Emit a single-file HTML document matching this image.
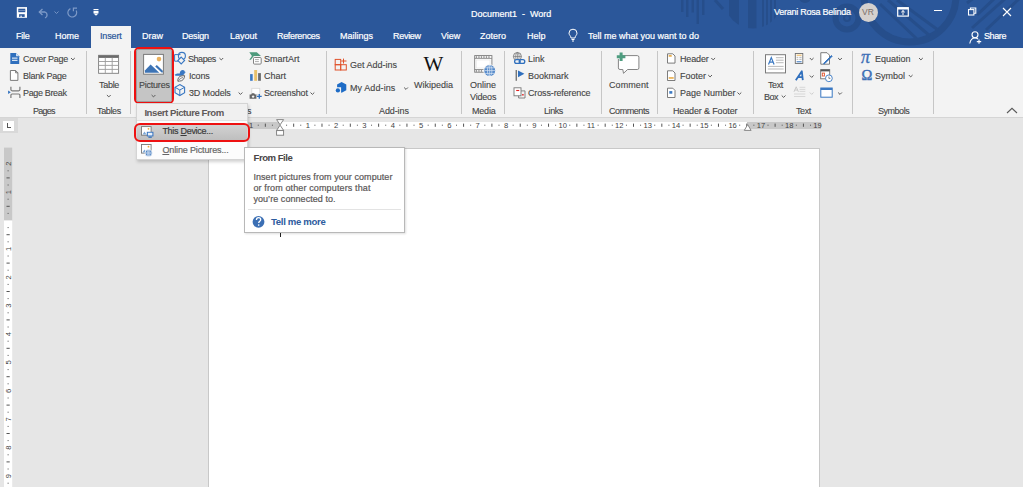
<!DOCTYPE html>
<html><head><meta charset="utf-8">
<style>
*{margin:0;padding:0;box-sizing:border-box}
html,body{width:1023px;height:487px;overflow:hidden;background:#e6e6e6;font-family:"Liberation Sans",sans-serif;font-size:9px;color:#444}
.rt,.gl,.tt{-webkit-text-stroke:0.12px currentColor;font-size:9.5px !important;transform:scaleX(0.947);transform-origin:0 0}
.tt{-webkit-text-stroke:0.22px currentColor}
.a{position:absolute;white-space:nowrap}
#title{position:absolute;left:0;top:0;width:1023px;height:48px;background:#2b579a;overflow:hidden}
.tt{position:absolute;color:#fff;font-size:9px;line-height:10px;white-space:nowrap}
#ribbon{position:absolute;left:0;top:48px;width:1023px;height:70px;background:#f3f3f3;border-bottom:1px solid #d5d5d5}
.rt{position:absolute;font-size:9px;line-height:10px;color:#444;white-space:nowrap}
.gl{position:absolute;font-size:9px;line-height:10px;color:#444;white-space:nowrap;top:105.8px}
.sep{position:absolute;top:51px;width:1px;height:63px;background:#c6c6c6}
.arr{position:absolute;width:5px;height:3px}
svg{position:absolute;overflow:visible}
</style></head><body>
<div id="title">
<svg width="1023" height="48" style="left:0;top:0">
 <g fill="#264e8b">
  <rect x="681" y="0" width="2.5" height="12"/>
  <rect x="686" y="0" width="2.5" height="17"/>
  <rect x="691.5" y="0" width="2.5" height="12.5"/>
  <rect x="696.5" y="0" width="2.5" height="24"/>
  <rect x="702" y="0" width="2.5" height="15"/>
 </g>
 <clipPath id="hc"><circle cx="753" cy="0" r="28.5"/></clipPath>
 <g clip-path="url(#hc)" fill="#264e8b">
  <rect x="729" y="0" width="10" height="30"/>
  <rect x="748" y="0" width="8.5" height="30"/>
  <rect x="762" y="0" width="2" height="30"/>
  <rect x="766" y="0" width="2" height="30"/>
  <rect x="770" y="0" width="2" height="30"/>
  <rect x="774" y="0" width="2" height="30"/>
 </g>
 <path d="M715 0 L723 9" stroke="#264e8b" stroke-width="3"/>
 <circle cx="847" cy="18" r="11.5" fill="none" stroke="#264e8b" stroke-width="6"/>
 <circle cx="847" cy="18" r="3" fill="none" stroke="#264e8b" stroke-width="2"/>
 <circle cx="805" cy="-3" r="6" fill="#264e8b"/>
 <circle cx="910" cy="-4" r="46" fill="none" stroke="#264e8b" stroke-width="7"/>
 <g stroke="#264e8b" stroke-width="3">
  <path d="M880 4 L918 40"/>
  <path d="M888 0 L930 36"/>
  <path d="M897 0 L938 30"/>
  <path d="M967 3 L975 -3"/>
  <path d="M977 15 L995 -2"/>
  <path d="M972 28 L1006 -2"/>
  <path d="M986 30 L1020 -2"/>
 </g>
</svg>
<!-- QAT -->
<svg width="14" height="14" style="left:15px;top:5px" viewBox="15 5 14 14">
 <rect x="16.8" y="7.1" width="10.2" height="10.7" fill="#fff"/>
 <rect x="18.3" y="8.7" width="7" height="3.5" fill="#2b579a"/>
 <rect x="18.3" y="10.2" width="7" height="0.7" fill="#8aa3cc"/>
 <rect x="19.1" y="14.2" width="5.6" height="2.7" fill="#2b579a"/>
 <rect x="20.4" y="15.6" width="1.4" height="1.3" fill="#fff"/>
</svg>
<svg width="12" height="10" style="left:38px;top:7.5px" viewBox="0 0 12 10">
 <path d="M1.5 4 H7 A3.2 3.2 0 0 1 7 10" fill="none" stroke="#7e9ac7" stroke-width="1.3"/>
 <path d="M4.5 1 L1.3 4 L4.5 7" fill="none" stroke="#7e9ac7" stroke-width="1.3"/>
</svg>
<svg width="5" height="3" style="left:54px;top:11px" viewBox="0 0 5 3"><path d="M0.5 0.5 L2.5 2.5 L4.5 0.5" fill="none" stroke="#7e9ac7" stroke-width="0.9"/></svg>
<svg width="14" height="14" style="left:65px;top:5px" viewBox="65 5 14 14">
 <path d="M70.4 8.6 A4.4 4.4 0 1 0 76.2 10.6" fill="none" stroke="#7e9ac7" stroke-width="1.2"/>
 <path d="M73.4 11.3 V8.2 H77" fill="none" stroke="#7e9ac7" stroke-width="1.2"/>
</svg>
<svg width="6" height="7" style="left:92.5px;top:9px" viewBox="0 0 6 7">
 <rect x="0.5" y="0" width="5" height="1.2" fill="#fff"/>
 <rect x="0.5" y="2" width="5" height="2.3" fill="#fff"/>
 <path d="M0.5 4.6 H5.5 L3 6.8 Z" fill="#fff"/>
</svg>
<div class="tt" style="left:470.5px;top:8.5px">Document1&nbsp;&nbsp;-&nbsp;&nbsp;Word</div>
<div class="tt" style="left:774px;top:7.3px;letter-spacing:-0.27px">Verani Rosa Belinda</div>
<div class="a" style="left:858.5px;top:2.5px;width:19px;height:19px;border-radius:50%;background:#d5d1ce;color:#7a6f68;font-size:8.5px;line-height:19px;text-align:center">VR</div>
<svg width="12" height="10" style="left:897px;top:6.5px" viewBox="0 0 12 10">
 <rect x="0.7" y="0.7" width="10.6" height="8.4" fill="none" stroke="#fff" stroke-width="1.2"/>
 <rect x="0.7" y="0.7" width="10.6" height="1.8" fill="#fff"/>
 <path d="M6 3.5 V8 M4.2 5.3 L6 3.6 L7.8 5.3" fill="none" stroke="#fff" stroke-width="1"/>
</svg>
<div class="a" style="left:933.5px;top:10.3px;width:8px;height:1.1px;background:#fff"></div>
<svg width="12" height="12" style="left:966px;top:5px" viewBox="966 5 12 12">
 <rect x="968.5" y="9.6" width="5.4" height="5.4" fill="none" stroke="#fff" stroke-width="1.05"/>
 <path d="M970.4 9.6 V7.9 H975.8 V13.2 H973.9" fill="none" stroke="#fff" stroke-width="1.05"/>
</svg>
<svg width="10" height="10" style="left:1001.5px;top:6.5px" viewBox="0 0 10 10">
 <path d="M1 1 L9 9 M9 1 L1 9" stroke="#fff" stroke-width="1.1"/>
</svg>
<!-- tabs -->
<div class="tt" style="left:15.5px;top:31.4px;letter-spacing:-0.3px">File</div>
<div class="tt" style="left:54.8px;top:31.4px">Home</div>
<div class="a" style="left:91px;top:25.5px;width:40px;height:23px;background:#f3f3f3"></div>
<div class="tt" style="left:99.6px;top:31.4px;color:#2b579a;letter-spacing:-0.15px">Insert</div>
<div class="tt" style="left:141.6px;top:31.4px">Draw</div>
<div class="tt" style="left:182.3px;top:31.4px;letter-spacing:-0.2px">Design</div>
<div class="tt" style="left:229.6px;top:31.4px">Layout</div>
<div class="tt" style="left:276.6px;top:31.4px;letter-spacing:-0.35px">References</div>
<div class="tt" style="left:339.6px;top:31.4px">Mailings</div>
<div class="tt" style="left:393.4px;top:31.4px;letter-spacing:-0.3px">Review</div>
<div class="tt" style="left:441px;top:31.4px">View</div>
<div class="tt" style="left:480px;top:31.4px">Zotero</div>
<div class="tt" style="left:527px;top:31.4px">Help</div>
<svg width="10" height="13" style="left:567.5px;top:29px" viewBox="0 0 10 13">
 <path d="M3 9 C3 7 1 6 1 4.2 A4 4 0 0 1 9 4.2 C9 6 7 7 7 9 Z" fill="none" stroke="#fff" stroke-width="1"/>
 <path d="M3.5 10.5 H6.5 M4 12 H6" stroke="#fff" stroke-width="1"/>
</svg>
<div class="tt" style="left:587.5px;top:31.4px">Tell me what you want to do</div>
<svg width="13" height="13" style="left:969px;top:30.5px" viewBox="0 0 13 13">
 <circle cx="6" cy="3.8" r="3" fill="none" stroke="#fff" stroke-width="1.1"/>
 <path d="M0.8 12.5 C1.5 8.5 4 7 6 7 C7.3 7 8.3 7.4 9 8" fill="none" stroke="#fff" stroke-width="1.1"/>
 <path d="M10 8.5 V12.8 M7.8 10.6 H12.2" stroke="#fff" stroke-width="1.1"/>
</svg>
<div class="tt" style="left:984px;top:31.2px;letter-spacing:-0.4px">Share</div>
</div>
<div id="ribbon"></div>
<!-- separators -->
<div class="sep" style="left:86px"></div>
<div class="sep" style="left:129.5px"></div>
<div class="sep" style="left:326px"></div>
<div class="sep" style="left:461px"></div>
<div class="sep" style="left:504px"></div>
<div class="sep" style="left:600.5px"></div>
<div class="sep" style="left:656.5px"></div>
<div class="sep" style="left:753px"></div>
<div class="sep" style="left:852px"></div>
<div class="sep" style="left:933px"></div>
<!-- group labels -->
<div class="gl" style="left:32.5px;letter-spacing:-0.8px">Pages</div>
<div class="gl" style="left:96.7px;letter-spacing:-0.37px">Tables</div>
<div class="gl" style="left:205.7px">Illustrations</div>
<div class="gl" style="left:379.3px;letter-spacing:-0.1px">Add-ins</div>
<div class="gl" style="left:471.6px;letter-spacing:-0.2px">Media</div>
<div class="gl" style="left:543.6px;letter-spacing:-0.45px">Links</div>
<div class="gl" style="left:609px;letter-spacing:-0.45px">Comments</div>
<div class="gl" style="left:673.2px;letter-spacing:-0.15px">Header &amp; Footer</div>
<div class="gl" style="left:795.8px;letter-spacing:-0.4px">Text</div>
<div class="gl" style="left:877.6px;letter-spacing:-0.5px">Symbols</div>
<!-- Pages -->
<div class="rt" style="left:22.8px;top:53.8px;letter-spacing:-0.25px">Cover Page</div>
<div class="rt" style="left:22.8px;top:71.1px;letter-spacing:-0.26px">Blank Page</div>
<div class="rt" style="left:22.8px;top:88.2px;letter-spacing:-0.36px">Page Break</div>
<!-- Tables -->
<div class="rt" style="left:98.6px;top:79.6px;letter-spacing:-0.3px">Table</div>
<!-- Illustrations -->
<div class="a" style="left:134px;top:47px;width:40px;height:56.5px;border:2px solid #ee1111;border-radius:5px"></div>
<div class="a" style="left:136px;top:49px;width:36px;height:52.5px;background:#c5c5c5;border:1px solid #9e9e9e;border-radius:2px"></div>
<div class="rt" style="left:138.6px;top:79.6px;letter-spacing:-0.24px">Pictures</div>
<div class="rt" style="left:188.2px;top:53.8px;letter-spacing:-0.47px">Shapes</div>
<div class="rt" style="left:188.5px;top:71.1px;letter-spacing:-0.2px">Icons</div>
<div class="rt" style="left:188.5px;top:88.2px;letter-spacing:-0.15px">3D Models</div>
<div class="rt" style="left:263.9px;top:53.8px">SmartArt</div>
<div class="rt" style="left:263.9px;top:71.1px">Chart</div>
<div class="rt" style="left:263.9px;top:88.2px;letter-spacing:-0.19px">Screenshot</div>
<!-- Add-ins -->
<div class="rt" style="left:349.7px;top:60px">Get Add-ins</div>
<div class="rt" style="left:349.7px;top:82.8px;letter-spacing:0.1px">My Add-ins</div>
<div class="rt" style="left:414.4px;top:79.6px">Wikipedia</div>
<!-- Media -->
<div class="rt" style="left:470.1px;top:79.6px">Online</div>
<div class="rt" style="left:470.1px;top:91.6px;letter-spacing:-0.2px">Videos</div>
<!-- Links -->
<div class="rt" style="left:527.7px;top:53.8px">Link</div>
<div class="rt" style="left:527.7px;top:71.1px">Bookmark</div>
<div class="rt" style="left:527.7px;top:88.2px;letter-spacing:-0.15px">Cross-reference</div>
<!-- Comments -->
<div class="rt" style="left:609px;top:79.6px;letter-spacing:0.1px">Comment</div>
<!-- Header & Footer -->
<div class="rt" style="left:679.6px;top:53.8px;letter-spacing:-0.15px">Header</div>
<div class="rt" style="left:679.6px;top:71.1px">Footer</div>
<div class="rt" style="left:679.6px;top:88.2px">Page Number</div>
<!-- Text -->
<div class="rt" style="left:768.2px;top:79.6px;letter-spacing:-0.4px">Text</div>
<div class="rt" style="left:764px;top:91.6px;letter-spacing:-0.5px">Box</div>
<!-- Symbols -->
<div class="rt" style="left:875.4px;top:53.8px">Equation</div>
<div class="rt" style="left:875.4px;top:71.1px">Symbol</div>
<svg width="1023" height="120" style="left:0;top:0">
 <!-- Cover page -->
 <path d="M10.3 53 H16 L19.2 56.2 V63.9 H10.3 Z" fill="#2f6fbd"/>
 <path d="M16 53 V56.2 H19.2" fill="#cfe0f3"/>
 <rect x="12" y="57.6" width="5.5" height="1" fill="#fff"/>
 <rect x="12" y="59.8" width="5.5" height="1" fill="#fff"/>
 <!-- Blank page -->
 <path d="M10.4 70.5 H15.6 L17.9 72.8 V80.4 H10.4 Z" fill="#fff" stroke="#6e6e6e" stroke-width="0.9"/>
 <path d="M15.6 70.5 V72.8 H17.9" fill="none" stroke="#6e6e6e" stroke-width="0.9"/>
 <!-- Page break -->
 <path d="M10.9 86.8 V89.6 Q10.9 90.8 12.1 90.8 H18.7 Q19.9 90.8 19.9 89.6 V86.8" fill="none" stroke="#7a7a7a" stroke-width="1.2"/>
 <path d="M10.9 98 V95.2 Q10.9 94 12.1 94 H18.7 Q19.9 94 19.9 95.2 V98" fill="none" stroke="#7a7a7a" stroke-width="1.2"/>
 <path d="M8.1 90.6 L10.8 92.3 L8.1 93.9 Z" fill="#2f6fbd"/>
 <!-- Table -->
 <rect x="98.6" y="55.3" width="20" height="18" fill="#fff" stroke="#7d7d7d" stroke-width="0.9"/>
 <rect x="98.6" y="55.3" width="20" height="2.6" fill="#6b6b6b"/>
 <path d="M105.3 57.8 V73.3 M112.2 57.8 V73.3 M98.6 61.5 H118.6 M98.6 65.4 H118.6 M98.6 69.4 H118.6" stroke="#9b9b9b" stroke-width="0.9"/>
 <!-- Pictures -->
 <rect x="143.6" y="54.4" width="19.8" height="19.8" fill="#fff" stroke="#7a7a7a" stroke-width="1"/>
 <circle cx="159" cy="59.1" r="2.3" fill="#eab15e"/>
 <path d="M144.9 72.7 V70.5 L150.6 64.4 L159.3 72.7 Z" fill="#3c73b5"/>
 <path d="M155.2 66.6 L156.8 65 L162.8 70.8 V72.6 H161.6 Z" fill="#3c73b5"/>
 <!-- Shapes -->
 <path d="M180.5 54.6 H174.6 V61.2 H178.5" fill="none" stroke="#3a78c2" stroke-width="1"/>
 <circle cx="181.9" cy="55.9" r="3.5" fill="none" stroke="#3a78c2" stroke-width="1.1"/>
 <path d="M181.2 57.1 L184.6 60.5 L181.2 63.9 L177.8 60.5 Z" fill="#f3f3f3" stroke="#3a78c2" stroke-width="1.1"/>
 <!-- Icons -->
 <path d="M174.6 74.8 C176.5 73.2 178.5 73.3 179.8 73.6 C179.8 71.6 181 70.1 182.8 70.1 C184 70.1 184.6 70.9 184.8 71.7 L186 72.1 L184.8 72.7 C184.5 74.9 182.5 75.8 180 75.8 L175.5 75.8 Z" fill="#3a78c2"/>
 <path d="M177.9 81.3 C177.4 78.5 179 76 182 75.8 L184.6 75.6 C184.6 78.6 182.8 81.1 179.6 81.1 Z" fill="#f3f3f3" stroke="#6b6b6b" stroke-width="1"/>
 <path d="M178.3 80.6 C179.5 79 181 78 183 77.5" fill="none" stroke="#6b6b6b" stroke-width="0.8"/>
 <!-- 3D Models -->
 <path d="M179.8 84.6 L184.6 87.3 V92.8 L179.8 95.5 L175 92.8 V87.3 Z" fill="none" stroke="#3a78c2" stroke-width="1.1"/>
 <path d="M175 87.3 L179.8 90 L184.6 87.3 M179.8 90 V95.5" fill="none" stroke="#3a78c2" stroke-width="1"/>
 <!-- SmartArt -->
 <path d="M249.3 52.2 H256.8 L261 56 H253.8 L250.9 59.8 H249.3 L251.9 56.1 Z" fill="#4e9a7c"/>
 <rect x="253.5" y="57.5" width="7.7" height="6.6" rx="1" fill="#fff" stroke="#757575" stroke-width="0.9"/>
 <path d="M255 59.6 H258.9 M255 61.6 H258.9" stroke="#8a8a8a" stroke-width="0.7"/>
 <!-- Chart -->
 <rect x="250.1" y="74.1" width="2.6" height="6.7" fill="#3a78c2"/>
 <rect x="254.2" y="70" width="2.9" height="10.8" fill="#e9c16a"/>
 <rect x="258.1" y="73.1" width="2.8" height="7.7" fill="#6b6b6b"/>
 <!-- Screenshot -->
 <rect x="251.8" y="88.3" width="8" height="6" fill="#fff" stroke="#d6d6d6" stroke-width="0.8"/>
 <path d="M249.6 94.6 H251.2 L252 93.3 H254.2 L255 94.6 H256.4 V98.8 H249.6 Z" fill="#666"/>
 <circle cx="253.1" cy="96.6" r="1.2" fill="#f3f3f3"/>
 <path d="M259.3 93.9 V98.8 M256.9 96.35 H261.7" stroke="#2f6fbd" stroke-width="1.3"/>
 <!-- Get Add-ins -->
 <g fill="none" stroke="#e0522b" stroke-width="1">
  <rect x="335.2" y="59.4" width="5.5" height="5.3"/>
  <rect x="335.2" y="64.7" width="5.5" height="5.3"/>
  <rect x="340.7" y="64.7" width="5.6" height="5.3"/>
  <path d="M343.5 58.6 V63.5 M341.2 61 H346.5"/>
 </g>
 <!-- My Add-ins -->
 <path d="M341.6 82.1 L346.3 84.6 V90.3 L341.6 92.8 L341.1 92.5 V87.2 H337.1 V84.6 Z" fill="#1e6cc6"/>
 <circle cx="337.9" cy="90.4" r="2.15" fill="#1e6cc6"/>
 <!-- Online videos -->
 <rect x="474.7" y="55.6" width="17.2" height="16.6" fill="#fff" stroke="#7a7a7a" stroke-width="0.9"/>
 <path d="M474.7 58.4 H491.9 M474.7 69.5 H491.9" stroke="#7a7a7a" stroke-width="0.8"/>
 <g fill="#6e6e6e">
  <rect x="475.8" y="56.4" width="1.3" height="1.3"/><rect x="478.3" y="56.4" width="1.3" height="1.3"/><rect x="480.8" y="56.4" width="1.3" height="1.3"/><rect x="483.3" y="56.4" width="1.3" height="1.3"/><rect x="485.8" y="56.4" width="1.3" height="1.3"/><rect x="488.3" y="56.4" width="1.3" height="1.3"/>
  <rect x="475.8" y="70.3" width="1.3" height="1.3"/><rect x="478.3" y="70.3" width="1.3" height="1.3"/><rect x="480.8" y="70.3" width="1.3" height="1.3"/>
 </g>
 <rect x="476.5" y="60" width="13.5" height="8" fill="none" stroke="#e4e4e4" stroke-width="0.6"/>
 <circle cx="489.7" cy="70.6" r="6.4" fill="#f3f3f3"/>
 <circle cx="489.7" cy="70.6" r="5.5" fill="#5288c9"/>
 <g stroke="#dce8f6" stroke-width="0.7" fill="none">
  <ellipse cx="489.7" cy="70.6" rx="2.2" ry="5.3"/>
  <path d="M484.4 70.6 H495 M485.1 67.8 H494.3 M485.1 73.4 H494.3 M489.7 65.3 V75.9"/>
 </g>
 <!-- Link -->
 <circle cx="517.4" cy="56.5" r="4" fill="none" stroke="#777" stroke-width="0.9"/>
 <path d="M513.5 56.5 H521.3 M517.4 52.5 V60.5" stroke="#777" stroke-width="0.7"/>
 <ellipse cx="517.4" cy="56.5" rx="1.8" ry="4" fill="none" stroke="#777" stroke-width="0.7"/>
 <rect x="514.6" y="59.6" width="5.6" height="3.8" rx="1.9" fill="#f3f3f3" stroke="#2f6fbd" stroke-width="1.3"/>
 <rect x="519.2" y="59.6" width="5.6" height="3.8" rx="1.9" fill="none" stroke="#2f6fbd" stroke-width="1.3"/>
 <!-- Bookmark -->
 <rect x="515.6" y="70" width="1.3" height="10.8" fill="#6b6b6b"/>
 <path d="M518 70.5 L524.4 73.8 L518 77.2 Z" fill="#2f6fbd"/>
 <!-- Cross reference -->
 <rect x="514" y="87.8" width="7" height="8" fill="#fff" stroke="#777" stroke-width="0.9"/>
 <path d="M516.2 90.5 H519.2" stroke="#e02020" stroke-width="1.1"/>
 <path d="M521 90.9 H525 V98 H518.6 V95.8" fill="none" stroke="#777" stroke-width="0.9"/>
 <rect x="522.1" y="94.1" width="1.6" height="1.4" fill="#e02020"/>
 <!-- Comment -->
 <path d="M622 55.6 H637.3 A1.6 1.6 0 0 1 638.9 57.2 V67.9 A1.6 1.6 0 0 1 637.3 69.5 H627.6 L623.5 73.3 L622.8 69.5 H620 A1.6 1.6 0 0 1 618.4 67.9 V59" fill="#fff" stroke="#777" stroke-width="0.9"/>
 <path d="M621.1 52.5 V61.1 M616.8 56.8 H625.4" stroke="#4f9d80" stroke-width="3"/>
 <!-- Header/Footer/Page number -->
 <g fill="#fff" stroke="#6e6e6e" stroke-width="0.9">
  <path d="M667.5 53.8 H672.8 L675 56 V63.1 H667.5 Z"/>
  <path d="M667.5 70.8 H672.8 L675 73 V80.5 H667.5 Z"/>
  <path d="M667.5 88.2 H672.8 L675 90.4 V97.5 H667.5 Z"/>
 </g>
 <rect x="668.7" y="55.1" width="3" height="1.6" fill="#e9a83c"/>
 <rect x="668.7" y="77.2" width="5" height="1.5" fill="#e9a83c"/>
 <rect x="669.3" y="91.1" width="3" height="2.6" fill="#3a78c2"/>
 <!-- Text box -->
 <rect x="765.5" y="54.7" width="20" height="18.2" fill="#fff" stroke="#7a7a7a" stroke-width="1"/>
 <path d="M768.5 64.5 L771.3 57.6 L774.1 64.5 M769.5 62.2 H773.1" fill="none" stroke="#3a78c2" stroke-width="1.2"/>
 <path d="M775.9 57.7 H783.6 M775.9 60.2 H783.6 M775.9 62.7 H783.6 M767.9 66.4 H783.6 M767.9 69 H783.6" stroke="#a8a8a8" stroke-width="0.8"/>
 <!-- Quick parts -->
 <rect x="795.3" y="53.5" width="7.5" height="10" fill="#fff" stroke="#6e6e6e" stroke-width="0.9"/>
 <path d="M796.6 55.2 H801.6" stroke="#e9a83c" stroke-width="0.9"/>
 <path d="M796.6 57.3 H798.3 M799.3 57.3 H801.6 M796.6 59.3 H798.3 M799.3 59.3 H801.6" stroke="#9a9a9a" stroke-width="0.8"/>
 <path d="M796.6 61.8 H801.6" stroke="#2f6fbd" stroke-width="1"/>
 <!-- WordArt -->
 <path d="M795.8 80.2 L801.8 71.2 L802.8 80.2 M797.6 77.2 H802.4" fill="none" stroke="#2f6fbd" stroke-width="1.8" stroke-linejoin="round"/>
 <!-- Drop cap -->
 <path d="M794 91.8 L796.2 86.8 L798.4 91.8 M794.9 90 H797.5" fill="none" stroke="#c4c4c4" stroke-width="0.9"/>
 <path d="M799.5 87.3 H805.3 M799.5 89.4 H805.3 M799.5 91.4 H805.3 M794 94 H805.3 M794 96.5 H805.3" stroke="#cfcfcf" stroke-width="0.8"/>
 <!-- Signature line -->
 <path d="M820.8 52.7 H827 L829.5 55.2 V64.2 H820.8 Z" fill="#fff" stroke="#6e6e6e" stroke-width="0.9"/>
 <path d="M824.2 62.8 L823.7 64 L824.9 63.5 L832.2 56.2 L831.5 55.5 Z" fill="#2f6fbd" stroke="#2f6fbd" stroke-width="0.9"/>
 <!-- Date time -->
 <rect x="820.7" y="69.6" width="9" height="9.2" fill="#fff" stroke="#6e6e6e" stroke-width="0.9"/>
 <rect x="820.7" y="69.6" width="9" height="1.8" fill="#555"/>
 <rect x="822.3" y="73.1" width="2.1" height="2.9" fill="none" stroke="#e0522b" stroke-width="0.9"/>
 <circle cx="828.9" cy="78.3" r="3.4" fill="#fff" stroke="#3a78c2" stroke-width="0.9"/>
 <path d="M828.9 76.5 V78.4 H830.4" fill="none" stroke="#555" stroke-width="0.7"/>
 <!-- Object -->
 <rect x="820.8" y="88" width="11.4" height="9.2" fill="#fff" stroke="#3a78c2" stroke-width="1"/>
 <rect x="820.8" y="88" width="11.4" height="2" fill="#3a78c2"/>
</svg>
<div class="a" style="left:423.5px;top:54px;font-family:'Liberation Serif',serif;font-size:21px;line-height:20px;color:#111">W</div>
<div class="a" style="left:861px;top:48.5px;font-family:'Liberation Serif',serif;font-size:18px;line-height:16px;color:#3d6fb6;font-style:italic;-webkit-text-stroke:0.3px #3d6fb6">π</div>
<div class="a" style="left:861.5px;top:68px;font-family:'Liberation Serif',serif;font-size:14.5px;line-height:15px;color:#3d6fb6;-webkit-text-stroke:0.45px #3d6fb6">Ω</div>
<!-- dropdown arrows -->
<svg width="1023" height="120" style="left:0;top:0">
 <g fill="none" stroke="#5a5a5a" stroke-width="1">
  <path d="M71 58 L72.9 59.9 L74.8 58"/>
  <path d="M106.9 95 L108.8 96.9 L110.7 95"/>
  <path d="M151.6 95 L153.5 96.9 L155.4 95"/>
  <path d="M219.4 58 L221.3 59.9 L223.2 58"/>
  <path d="M238.6 92.5 L240.5 94.4 L242.4 92.5"/>
  <path d="M310.5 92.5 L312.4 94.4 L314.3 92.5"/>
  <path d="M404.1 87.5 L406 89.4 L407.9 87.5"/>
  <path d="M711.3 58 L713.2 59.9 L715.1 58"/>
  <path d="M708.2 75 L710.1 76.9 L712 75"/>
  <path d="M737.5 92.5 L739.4 94.4 L741.3 92.5"/>
  <path d="M781.7 95.5 L783.6 97.4 L785.5 95.5"/>
  <path d="M809.8 58 L811.7 59.9 L813.6 58"/>
  <path d="M809.8 75.5 L811.7 77.4 L813.6 75.5"/>
  <path d="M838.1 58 L840 59.9 L841.9 58"/>
  <path d="M838.1 92.5 L840 94.4 L841.9 92.5"/>
  <path d="M919 58 L920.9 59.9 L922.8 58"/>
  <path d="M908.8 75 L910.7 76.9 L912.6 75"/>
  <path d="M1007 113 L1012 108.3 L1017 113" stroke-width="1.1"/>
 </g>
 <path d="M809.8 92.5 L811.7 94.4 L813.6 92.5" fill="none" stroke="#c8c8c8" stroke-width="0.9"/>
</svg>
<!-- DOC -->
<div class="a" style="left:0;top:117.5px;width:17.5px;height:15.5px;background:#d9d9d9"></div>
<div class="a" style="left:3px;top:120.5px;width:11px;height:10px;background:#fff"></div>
<div class="a" style="left:6.5px;top:123px;width:1.3px;height:5px;background:#555"></div>
<div class="a" style="left:6.5px;top:126.8px;width:4.5px;height:1.3px;background:#555"></div>
<div class="a" style="left:209px;top:121.5px;width:612px;height:7.5px;background:#c8c8c8"></div>
<div class="a" style="left:279.5px;top:121.5px;width:467.5px;height:7.5px;background:#fff"></div>
<svg width="1023" height="487" style="left:0;top:0">
<rect x="215.28" y="124.7" width="1" height="1" fill="#555"/>
<text x="222.86" y="127.6" font-size="7.6" text-anchor="middle" fill="#444" font-family="Liberation Sans">2</text>
<rect x="229.44" y="124.7" width="1" height="1" fill="#555"/>
<rect x="236.52" y="123.6" width="1" height="3.2" fill="#555"/>
<rect x="243.60" y="124.7" width="1" height="1" fill="#555"/>
<text x="251.18" y="127.6" font-size="7.6" text-anchor="middle" fill="#444" font-family="Liberation Sans">1</text>
<rect x="257.76" y="124.7" width="1" height="1" fill="#555"/>
<rect x="264.84" y="123.6" width="1" height="3.2" fill="#555"/>
<rect x="271.92" y="124.7" width="1" height="1" fill="#555"/>
<rect x="286.08" y="124.7" width="1" height="1" fill="#555"/>
<rect x="293.16" y="123.6" width="1" height="3.2" fill="#555"/>
<rect x="300.24" y="124.7" width="1" height="1" fill="#555"/>
<text x="307.82" y="127.6" font-size="7.6" text-anchor="middle" fill="#444" font-family="Liberation Sans">1</text>
<rect x="314.40" y="124.7" width="1" height="1" fill="#555"/>
<rect x="321.48" y="123.6" width="1" height="3.2" fill="#555"/>
<rect x="328.56" y="124.7" width="1" height="1" fill="#555"/>
<text x="336.14" y="127.6" font-size="7.6" text-anchor="middle" fill="#444" font-family="Liberation Sans">2</text>
<rect x="342.72" y="124.7" width="1" height="1" fill="#555"/>
<rect x="349.80" y="123.6" width="1" height="3.2" fill="#555"/>
<rect x="356.88" y="124.7" width="1" height="1" fill="#555"/>
<text x="364.46" y="127.6" font-size="7.6" text-anchor="middle" fill="#444" font-family="Liberation Sans">3</text>
<rect x="371.04" y="124.7" width="1" height="1" fill="#555"/>
<rect x="378.12" y="123.6" width="1" height="3.2" fill="#555"/>
<rect x="385.20" y="124.7" width="1" height="1" fill="#555"/>
<text x="392.78" y="127.6" font-size="7.6" text-anchor="middle" fill="#444" font-family="Liberation Sans">4</text>
<rect x="399.36" y="124.7" width="1" height="1" fill="#555"/>
<rect x="406.44" y="123.6" width="1" height="3.2" fill="#555"/>
<rect x="413.52" y="124.7" width="1" height="1" fill="#555"/>
<text x="421.10" y="127.6" font-size="7.6" text-anchor="middle" fill="#444" font-family="Liberation Sans">5</text>
<rect x="427.68" y="124.7" width="1" height="1" fill="#555"/>
<rect x="434.76" y="123.6" width="1" height="3.2" fill="#555"/>
<rect x="441.84" y="124.7" width="1" height="1" fill="#555"/>
<text x="449.42" y="127.6" font-size="7.6" text-anchor="middle" fill="#444" font-family="Liberation Sans">6</text>
<rect x="456.00" y="124.7" width="1" height="1" fill="#555"/>
<rect x="463.08" y="123.6" width="1" height="3.2" fill="#555"/>
<rect x="470.16" y="124.7" width="1" height="1" fill="#555"/>
<text x="477.74" y="127.6" font-size="7.6" text-anchor="middle" fill="#444" font-family="Liberation Sans">7</text>
<rect x="484.32" y="124.7" width="1" height="1" fill="#555"/>
<rect x="491.40" y="123.6" width="1" height="3.2" fill="#555"/>
<rect x="498.48" y="124.7" width="1" height="1" fill="#555"/>
<text x="506.06" y="127.6" font-size="7.6" text-anchor="middle" fill="#444" font-family="Liberation Sans">8</text>
<rect x="512.64" y="124.7" width="1" height="1" fill="#555"/>
<rect x="519.72" y="123.6" width="1" height="3.2" fill="#555"/>
<rect x="526.80" y="124.7" width="1" height="1" fill="#555"/>
<text x="534.38" y="127.6" font-size="7.6" text-anchor="middle" fill="#444" font-family="Liberation Sans">9</text>
<rect x="540.96" y="124.7" width="1" height="1" fill="#555"/>
<rect x="548.04" y="123.6" width="1" height="3.2" fill="#555"/>
<rect x="555.12" y="124.7" width="1" height="1" fill="#555"/>
<text x="562.70" y="127.6" font-size="7.6" text-anchor="middle" fill="#444" font-family="Liberation Sans">10</text>
<rect x="569.28" y="124.7" width="1" height="1" fill="#555"/>
<rect x="576.36" y="123.6" width="1" height="3.2" fill="#555"/>
<rect x="583.44" y="124.7" width="1" height="1" fill="#555"/>
<text x="591.02" y="127.6" font-size="7.6" text-anchor="middle" fill="#444" font-family="Liberation Sans">11</text>
<rect x="597.60" y="124.7" width="1" height="1" fill="#555"/>
<rect x="604.68" y="123.6" width="1" height="3.2" fill="#555"/>
<rect x="611.76" y="124.7" width="1" height="1" fill="#555"/>
<text x="619.34" y="127.6" font-size="7.6" text-anchor="middle" fill="#444" font-family="Liberation Sans">12</text>
<rect x="625.92" y="124.7" width="1" height="1" fill="#555"/>
<rect x="633.00" y="123.6" width="1" height="3.2" fill="#555"/>
<rect x="640.08" y="124.7" width="1" height="1" fill="#555"/>
<text x="647.66" y="127.6" font-size="7.6" text-anchor="middle" fill="#444" font-family="Liberation Sans">13</text>
<rect x="654.24" y="124.7" width="1" height="1" fill="#555"/>
<rect x="661.32" y="123.6" width="1" height="3.2" fill="#555"/>
<rect x="668.40" y="124.7" width="1" height="1" fill="#555"/>
<text x="675.98" y="127.6" font-size="7.6" text-anchor="middle" fill="#444" font-family="Liberation Sans">14</text>
<rect x="682.56" y="124.7" width="1" height="1" fill="#555"/>
<rect x="689.64" y="123.6" width="1" height="3.2" fill="#555"/>
<rect x="696.72" y="124.7" width="1" height="1" fill="#555"/>
<text x="704.30" y="127.6" font-size="7.6" text-anchor="middle" fill="#444" font-family="Liberation Sans">15</text>
<rect x="710.88" y="124.7" width="1" height="1" fill="#555"/>
<rect x="717.96" y="123.6" width="1" height="3.2" fill="#555"/>
<rect x="725.04" y="124.7" width="1" height="1" fill="#555"/>
<text x="732.62" y="127.6" font-size="7.6" text-anchor="middle" fill="#444" font-family="Liberation Sans">16</text>
<rect x="739.20" y="124.7" width="1" height="1" fill="#555"/>
<rect x="746.28" y="123.6" width="1" height="3.2" fill="#555"/>
<rect x="753.36" y="124.7" width="1" height="1" fill="#555"/>
<text x="760.94" y="127.6" font-size="7.6" text-anchor="middle" fill="#444" font-family="Liberation Sans">17</text>
<rect x="767.52" y="124.7" width="1" height="1" fill="#555"/>
<rect x="774.60" y="123.6" width="1" height="3.2" fill="#555"/>
<rect x="781.68" y="124.7" width="1" height="1" fill="#555"/>
<text x="789.26" y="127.6" font-size="7.6" text-anchor="middle" fill="#444" font-family="Liberation Sans">18</text>
<rect x="795.84" y="124.7" width="1" height="1" fill="#555"/>
<rect x="802.92" y="123.6" width="1" height="3.2" fill="#555"/>
<rect x="810.00" y="124.7" width="1" height="1" fill="#555"/>
<text x="817.58" y="127.6" font-size="7.6" text-anchor="middle" fill="#444" font-family="Liberation Sans">19</text>
<path d="M276.6 119.6 H283.6 L280.1 124.8 Z M276.6 130.4 H283.6 L280.1 125.2 Z" fill="#fff" stroke="#7a7a7a" stroke-width="0.9"/>
<rect x="276.6" y="130.6" width="7" height="4.6" fill="#fff" stroke="#7a7a7a" stroke-width="0.9"/>
<path d="M744.3 130.4 H751.1 L747.7 124.6 Z" fill="#fff" stroke="#7a7a7a" stroke-width="0.9"/>
<rect x="4" y="147.6" width="8.2" height="73" fill="#c8c8c8"/>
<rect x="4" y="220.5" width="8.2" height="270" fill="#fff"/>
<text x="0" y="0" transform="translate(10.6 163.70) rotate(-90)" font-size="7.6" text-anchor="middle" fill="#444" font-family="Liberation Sans">2</text>
<rect x="7.6" y="170.30" width="1" height="1" fill="#555"/>
<rect x="6.5" y="177.40" width="3.2" height="1" fill="#555"/>
<rect x="7.6" y="184.50" width="1" height="1" fill="#555"/>
<text x="0" y="0" transform="translate(10.6 192.10) rotate(-90)" font-size="7.6" text-anchor="middle" fill="#444" font-family="Liberation Sans">1</text>
<rect x="7.6" y="198.70" width="1" height="1" fill="#555"/>
<rect x="6.5" y="205.80" width="3.2" height="1" fill="#555"/>
<rect x="7.6" y="212.90" width="1" height="1" fill="#555"/>
<rect x="7.6" y="227.10" width="1" height="1" fill="#555"/>
<rect x="6.5" y="234.20" width="3.2" height="1" fill="#555"/>
<rect x="7.6" y="241.30" width="1" height="1" fill="#555"/>
<text x="0" y="0" transform="translate(10.6 248.90) rotate(-90)" font-size="7.6" text-anchor="middle" fill="#444" font-family="Liberation Sans">1</text>
<rect x="7.6" y="255.50" width="1" height="1" fill="#555"/>
<rect x="6.5" y="262.60" width="3.2" height="1" fill="#555"/>
<rect x="7.6" y="269.70" width="1" height="1" fill="#555"/>
<text x="0" y="0" transform="translate(10.6 277.30) rotate(-90)" font-size="7.6" text-anchor="middle" fill="#444" font-family="Liberation Sans">2</text>
<rect x="7.6" y="283.90" width="1" height="1" fill="#555"/>
<rect x="6.5" y="291.00" width="3.2" height="1" fill="#555"/>
<rect x="7.6" y="298.10" width="1" height="1" fill="#555"/>
<text x="0" y="0" transform="translate(10.6 305.70) rotate(-90)" font-size="7.6" text-anchor="middle" fill="#444" font-family="Liberation Sans">3</text>
<rect x="7.6" y="312.30" width="1" height="1" fill="#555"/>
<rect x="6.5" y="319.40" width="3.2" height="1" fill="#555"/>
<rect x="7.6" y="326.50" width="1" height="1" fill="#555"/>
<text x="0" y="0" transform="translate(10.6 334.10) rotate(-90)" font-size="7.6" text-anchor="middle" fill="#444" font-family="Liberation Sans">4</text>
<rect x="7.6" y="340.70" width="1" height="1" fill="#555"/>
<rect x="6.5" y="347.80" width="3.2" height="1" fill="#555"/>
<rect x="7.6" y="354.90" width="1" height="1" fill="#555"/>
<text x="0" y="0" transform="translate(10.6 362.50) rotate(-90)" font-size="7.6" text-anchor="middle" fill="#444" font-family="Liberation Sans">5</text>
<rect x="7.6" y="369.10" width="1" height="1" fill="#555"/>
<rect x="6.5" y="376.20" width="3.2" height="1" fill="#555"/>
<rect x="7.6" y="383.30" width="1" height="1" fill="#555"/>
<text x="0" y="0" transform="translate(10.6 390.90) rotate(-90)" font-size="7.6" text-anchor="middle" fill="#444" font-family="Liberation Sans">6</text>
<rect x="7.6" y="397.50" width="1" height="1" fill="#555"/>
<rect x="6.5" y="404.60" width="3.2" height="1" fill="#555"/>
<rect x="7.6" y="411.70" width="1" height="1" fill="#555"/>
<text x="0" y="0" transform="translate(10.6 419.30) rotate(-90)" font-size="7.6" text-anchor="middle" fill="#444" font-family="Liberation Sans">7</text>
<rect x="7.6" y="425.90" width="1" height="1" fill="#555"/>
<rect x="6.5" y="433.00" width="3.2" height="1" fill="#555"/>
<rect x="7.6" y="440.10" width="1" height="1" fill="#555"/>
<text x="0" y="0" transform="translate(10.6 447.70) rotate(-90)" font-size="7.6" text-anchor="middle" fill="#444" font-family="Liberation Sans">8</text>
<rect x="7.6" y="454.30" width="1" height="1" fill="#555"/>
<rect x="6.5" y="461.40" width="3.2" height="1" fill="#555"/>
<rect x="7.6" y="468.50" width="1" height="1" fill="#555"/>
<text x="0" y="0" transform="translate(10.6 476.10) rotate(-90)" font-size="7.6" text-anchor="middle" fill="#444" font-family="Liberation Sans">9</text>
<rect x="7.6" y="482.70" width="1" height="1" fill="#555"/>
</svg>
<div class="a" style="left:208px;top:148px;width:612px;height:400px;background:#fff;border:1px solid #c8c8c8"></div>
<div class="a" style="left:279.5px;top:229px;width:1px;height:8px;background:#222"></div>
<!-- /DOC -->
<!-- MENU -->
<div class="a" style="left:136px;top:102.5px;width:111.5px;height:57px;background:#fcfcfc;border:1px solid #d4d4d4;box-shadow:1px 2px 3px rgba(0,0,0,0.18)"></div>
<div class="a" style="left:137px;top:103.5px;width:109.5px;height:17px;background:#f0f0f0;border-bottom:1px solid #e2e2e2"></div>
<div class="a" style="left:144.4px;top:108px;font-size:9.6px;line-height:10px;font-weight:bold;color:#5f5a5a;letter-spacing:-0.45px">Insert Picture From</div>
<div class="a" style="left:137px;top:124.5px;width:109.5px;height:16px;background:linear-gradient(#d2d2d2,#bdbdbd)"></div>
<div class="a" style="left:134px;top:123px;width:115.5px;height:18.5px;border:2px solid #ee1111;border-radius:6px"></div>
<div class="a" style="left:162.4px;top:126.4px;font-size:9px;line-height:10px;color:#3a3a3a;letter-spacing:-0.29px;-webkit-text-stroke:0.2px #3a3a3a">This <u>D</u>evice...</div>
<div class="a" style="left:162.4px;top:144.7px;font-size:9px;line-height:10px;color:#666;letter-spacing:-0.13px;-webkit-text-stroke:0.2px #666"><u>O</u>nline Pictures...</div>
<svg width="1023" height="487" style="left:0;top:0">
 <rect x="141.5" y="126.6" width="9.6" height="8.6" fill="#fff" stroke="#777" stroke-width="0.9"/>
 <circle cx="148.5" cy="128.8" r="0.9" fill="#e9a83c"/>
 <path d="M142.5 134.5 L144.5 131.5 L146.5 134.5 Z" fill="#7aa6d6"/>
 <rect x="146.8" y="131.8" width="6.6" height="4.6" fill="#2f6fbd"/>
 <rect x="147.8" y="132.7" width="4.6" height="2.8" fill="#e8f0fa"/>
 <rect x="148.4" y="136.6" width="3.4" height="1.2" fill="#2f6fbd"/>
 <rect x="141.5" y="144.5" width="9.6" height="8.6" fill="#fff" stroke="#777" stroke-width="0.9"/>
 <circle cx="148.5" cy="146.7" r="0.9" fill="#e9a83c"/>
 <path d="M142.5 152.4 L144.5 149.4 L146.5 152.4 Z" fill="#7aa6d6"/>
 <circle cx="148.6" cy="153" r="3.6" fill="#4a7fc1" stroke="#fcfcfc" stroke-width="0.8"/>
 <path d="M145.2 153 H152 M148.6 149.6 V156.4" stroke="#e8f0fa" stroke-width="0.6"/>
 <ellipse cx="148.6" cy="153" rx="1.4" ry="3.3" fill="none" stroke="#e8f0fa" stroke-width="0.6"/>
</svg>
<!-- TOOLTIP -->
<div class="a" style="left:244px;top:147px;width:160.5px;height:85.5px;background:#fff;border:1px solid #b8b8b8;box-shadow:1px 1px 2px rgba(0,0,0,0.13)"></div>
<div class="a" style="left:253.6px;top:152.6px;font-size:9.6px;line-height:10px;font-weight:bold;color:#4a4646;letter-spacing:-0.5px">From File</div>
<div class="a" style="left:253.4px;top:171.6px;font-size:9px;line-height:11.1px;color:#5a5656;letter-spacing:0.06px;-webkit-text-stroke:0.2px #5a5656">Insert pictures from your computer<br><span style="letter-spacing:0.13px">or from other computers that</span><br>you’re connected to.</div>
<div class="a" style="left:248px;top:209.2px;width:153px;height:1px;background:#e3e3e3"></div>
<svg width="1023" height="487" style="left:0;top:0">
 <circle cx="258.5" cy="221.8" r="5.9" fill="#3b6fb4"/>
 <path d="M256.4 220.1 C256.4 218.4 257.4 217.7 258.6 217.7 C259.9 217.7 260.7 218.6 260.7 219.7 C260.7 221.3 258.7 221.3 258.7 223" fill="none" stroke="#fff" stroke-width="1.3"/>
 <circle cx="258.7" cy="225.1" r="0.8" fill="#fff"/>
</svg>
<div class="a" style="left:271px;top:217px;font-size:9.6px;line-height:10px;font-weight:bold;color:#2e5c9e;letter-spacing:-0.33px">Tell me more</div>
</body></html>
